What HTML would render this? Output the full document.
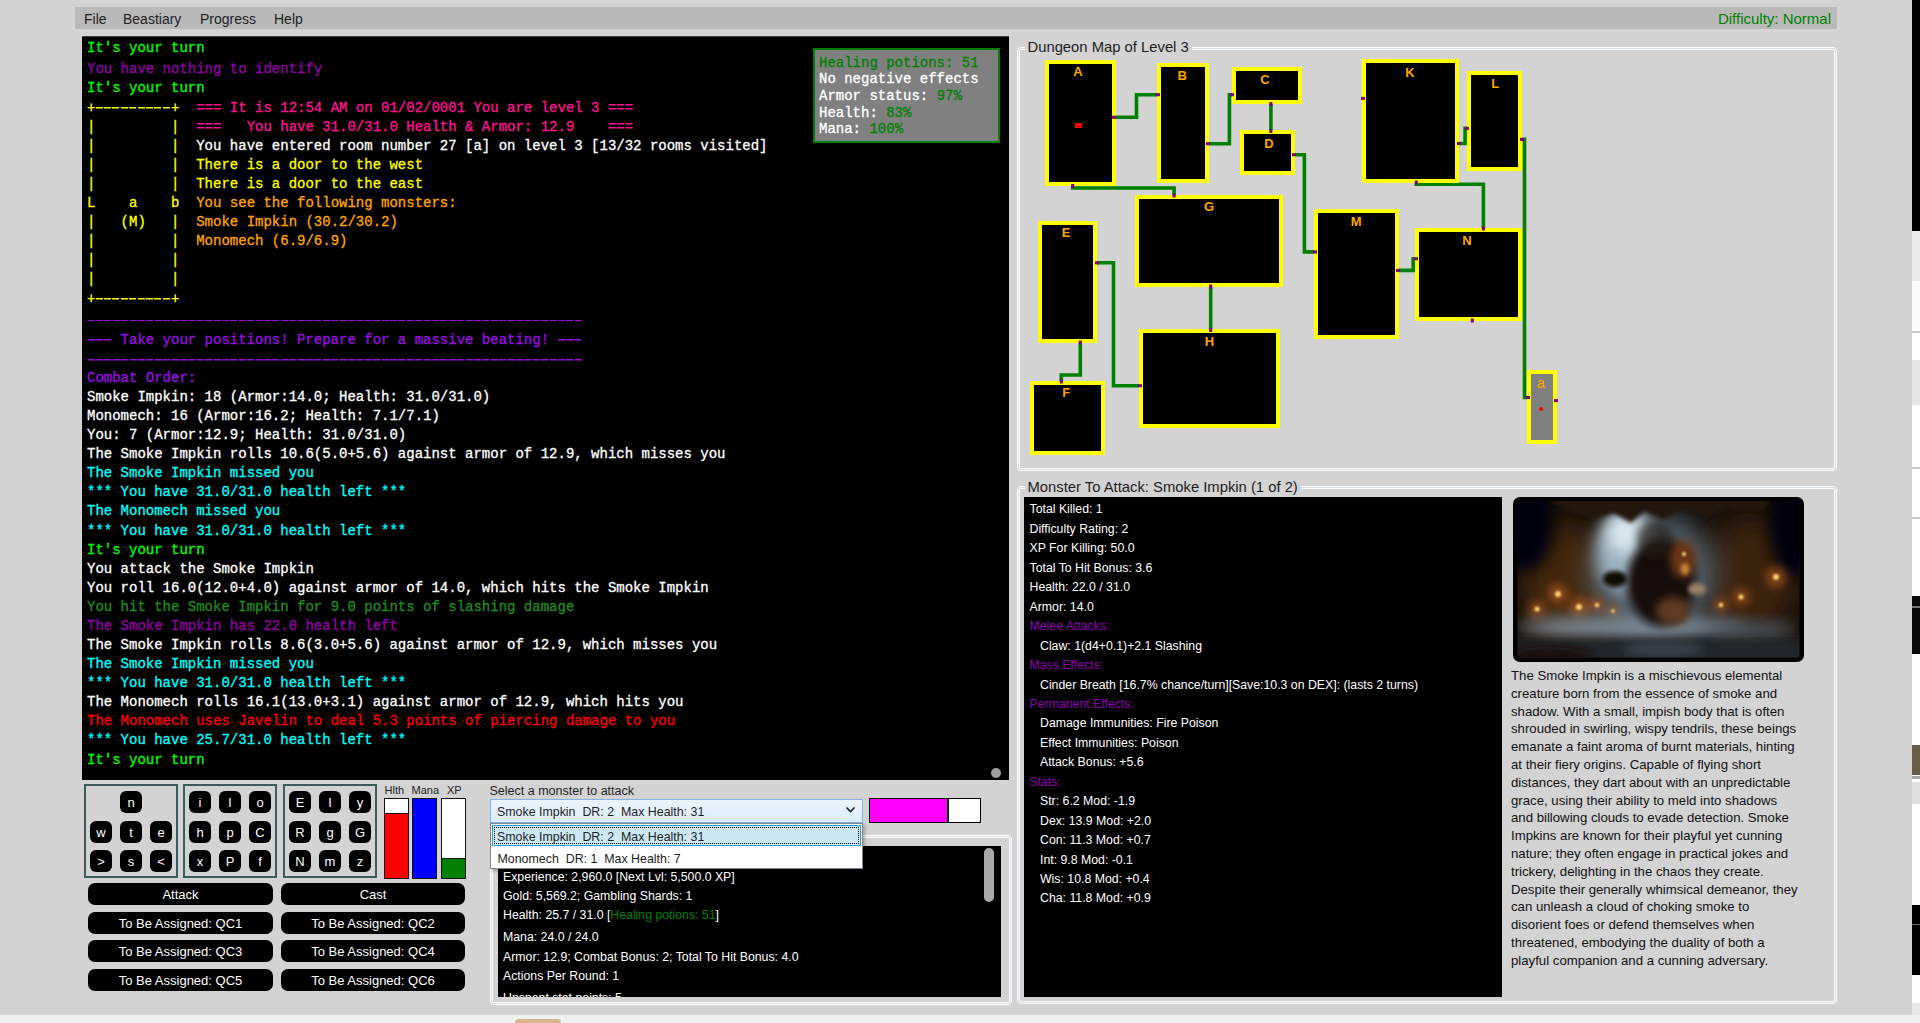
<!DOCTYPE html>
<html><head><meta charset="utf-8"><style>*{margin:0;padding:0;box-sizing:border-box}
html,body{width:1920px;height:1023px;overflow:hidden;background:#f0f0f0}
body{position:relative;font-family:"Liberation Sans",sans-serif}
.a{position:absolute}
.win{position:absolute;left:0;top:0;width:1912px;height:1015px;background:#d3d3d3;overflow:hidden}
.menu{left:75px;top:7px;width:1762px;height:22px;background:#b9b9b9}
.mi{font-size:14px;line-height:22px;top:1px;color:#1e1e1e;white-space:pre}
.term{left:82px;top:36px;width:927px;height:744px;background:#000;overflow:hidden}
.tl{position:absolute;left:5px;font-family:"Liberation Mono",monospace;font-size:14px;line-height:19px;white-space:pre;-webkit-text-stroke:0.3px currentColor}
.gb{position:absolute;border:1px solid #fff;border-radius:4px}
.gb>.i1{position:absolute;left:0;top:0;right:0;bottom:0;border:1px solid #d5dfe5;border-radius:3px}
.gb>.i1>.i2{position:absolute;left:0;top:0;right:0;bottom:0;border:1px solid #fff;border-radius:2px}
.gh{position:absolute;background:#d3d3d3;color:#1e1e1e;white-space:pre;font-size:14.8px;line-height:18px;padding:0 3px}
.room{position:absolute;background:#000;border:4px solid #ff0}
.rl{position:absolute;left:0;right:0;text-align:center;color:#ffa500;font-weight:bold;font-size:13px;line-height:14px}
.txt{position:absolute;white-space:pre;color:#fff;font-size:12.3px;line-height:19px}
.kp{position:absolute;top:784px;width:94px;height:94px;border:2px solid #3c5c5c}
.kb{position:absolute;width:22px;height:22px;background:#000;border-radius:6px;color:#fff;font-size:13px;line-height:23px;text-align:center}
.bt{position:absolute;height:22px;background:#000;border-radius:7px;color:#fff;font-size:13px;line-height:24px;text-align:center;white-space:pre}
.bar{position:absolute;top:798px;width:25px;height:81px;border:1px solid #111;background:#fff;overflow:hidden}
.bar>div{position:absolute;left:0;right:0;bottom:0}
</style></head><body>
<div class="win">
<div class="a menu" style="padding-top:1.5px"><div class="a mi" style="left:9px">File</div><div class="a mi" style="left:48px">Beastiary</div><div class="a mi" style="left:125px">Progress</div><div class="a mi" style="left:199px">Help</div><div class="a mi" style="right:6px;color:#008000;font-size:15px">Difficulty: Normal</div></div>
<div class="a term"><div class="tl" style="top:2.87px"><span style="color:#00ff00">It's your turn</span></div>
<div class="tl" style="top:24.37px"><span style="color:#9400a8">You have nothing to identify</span></div>
<div class="tl" style="top:43.47px"><span style="color:#00ff00">It's your turn</span></div>
<div class="tl" style="top:62.77px"><span style="color:#ffff00">+</span><span style="display:inline-block;vertical-align:top;width:75.6px;height:19px;background:repeating-linear-gradient(90deg,transparent 0 0.7px,#ffff00 0.7px 7.7px,transparent 7.7px 8.4px) 0 8.68px/100% 1.5px no-repeat"></span><span style="color:#ffff00">+  </span><span style="color:#ff1493">=== It is 12:54 AM on 01/02/0001 You are level 3 ===</span></div>
<div class="tl" style="top:81.85px"><span style="color:#ffff00">|         |  </span><span style="color:#ff1493">===   You have 31.0/31.0 Health &amp; Armor: 12.9    ===</span></div>
<div class="tl" style="top:100.93px"><span style="color:#ffff00">|         |  </span><span style="color:#ffffff">You have entered room number 27 [a] on level 3 [13/32 rooms visited]</span></div>
<div class="tl" style="top:120.01px"><span style="color:#ffff00">|         |  </span><span style="color:#ffff00">There is a door to the west</span></div>
<div class="tl" style="top:139.09px"><span style="color:#ffff00">|         |  </span><span style="color:#ffff00">There is a door to the east</span></div>
<div class="tl" style="top:158.17px"><span style="color:#ffff00">L    a    b  </span><span style="color:#ffa500">You see the following monsters:</span></div>
<div class="tl" style="top:177.25px"><span style="color:#ffff00">|   (M)   |  </span><span style="color:#ffa500">Smoke Impkin (30.2/30.2)</span></div>
<div class="tl" style="top:196.33px"><span style="color:#ffff00">|         |  </span><span style="color:#ffa500">Monomech (6.9/6.9)</span></div>
<div class="tl" style="top:215.41px"><span style="color:#ffff00">|         |</span></div>
<div class="tl" style="top:234.49px"><span style="color:#ffff00">|         |</span></div>
<div class="tl" style="top:253.57px"><span style="color:#ffff00">+</span><span style="display:inline-block;vertical-align:top;width:75.6px;height:19px;background:repeating-linear-gradient(90deg,transparent 0 0.7px,#ffff00 0.7px 7.7px,transparent 7.7px 8.4px) 0 8.68px/100% 1.5px no-repeat"></span><span style="color:#ffff00">+</span></div>
<div class="tl" style="top:275.67px"><span style="display:inline-block;vertical-align:top;width:495.6px;height:19px;background:repeating-linear-gradient(90deg,transparent 0 0.7px,#9a10e0 0.7px 7.7px,transparent 7.7px 8.4px) 0 8.63px/100% 1.2px no-repeat"></span></div>
<div class="tl" style="top:294.75px"><span style="display:inline-block;vertical-align:top;width:25.2px;height:19px;background:repeating-linear-gradient(90deg,transparent 0 0.7px,#9a10e0 0.7px 7.7px,transparent 7.7px 8.4px) 0 8.68px/100% 1.5px no-repeat"></span><span style="color:#9a10e0"> Take your positions! Prepare for a massive beating! </span><span style="display:inline-block;vertical-align:top;width:25.2px;height:19px;background:repeating-linear-gradient(90deg,transparent 0 0.7px,#9a10e0 0.7px 7.7px,transparent 7.7px 8.4px) 0 8.68px/100% 1.5px no-repeat"></span></div>
<div class="tl" style="top:313.83px"><span style="display:inline-block;vertical-align:top;width:495.6px;height:19px;background:repeating-linear-gradient(90deg,transparent 0 0.7px,#9a10e0 0.7px 7.7px,transparent 7.7px 8.4px) 0 8.68px/100% 1.5px no-repeat"></span></div>
<div class="tl" style="top:332.91px"><span style="color:#9a10e0">Combat Order:</span></div>
<div class="tl" style="top:351.99px"><span style="color:#ffffff">Smoke Impkin: 18 (Armor:14.0; Health: 31.0/31.0)</span></div>
<div class="tl" style="top:371.07px"><span style="color:#ffffff">Monomech: 16 (Armor:16.2; Health: 7.1/7.1)</span></div>
<div class="tl" style="top:390.15px"><span style="color:#ffffff">You: 7 (Armor:12.9; Health: 31.0/31.0)</span></div>
<div class="tl" style="top:409.23px"><span style="color:#ffffff">The Smoke Impkin rolls 10.6(5.0+5.6) against armor of 12.9, which misses you</span></div>
<div class="tl" style="top:428.31px"><span style="color:#00ffff">The Smoke Impkin missed you</span></div>
<div class="tl" style="top:447.39px"><span style="color:#00ffff">*** You have 31.0/31.0 health left ***</span></div>
<div class="tl" style="top:466.47px"><span style="color:#00ffff">The Monomech missed you</span></div>
<div class="tl" style="top:485.55px"><span style="color:#00ffff">*** You have 31.0/31.0 health left ***</span></div>
<div class="tl" style="top:504.63px"><span style="color:#00ff00">It's your turn</span></div>
<div class="tl" style="top:523.71px"><span style="color:#ffffff">You attack the Smoke Impkin</span></div>
<div class="tl" style="top:542.79px"><span style="color:#ffffff">You roll 16.0(12.0+4.0) against armor of 14.0, which hits the Smoke Impkin</span></div>
<div class="tl" style="top:561.87px"><span style="color:#228b22">You hit the Smoke Impkin for 9.0 points of slashing damage</span></div>
<div class="tl" style="top:580.95px"><span style="color:#9400a8">The Smoke Impkin has 22.0 health left</span></div>
<div class="tl" style="top:600.03px"><span style="color:#ffffff">The Smoke Impkin rolls 8.6(3.0+5.6) against armor of 12.9, which misses you</span></div>
<div class="tl" style="top:619.11px"><span style="color:#00ffff">The Smoke Impkin missed you</span></div>
<div class="tl" style="top:638.19px"><span style="color:#00ffff">*** You have 31.0/31.0 health left ***</span></div>
<div class="tl" style="top:657.27px"><span style="color:#ffffff">The Monomech rolls 16.1(13.0+3.1) against armor of 12.9, which hits you</span></div>
<div class="tl" style="top:676.35px"><span style="color:#ff0000">The Monomech uses Javelin to deal 5.3 points of piercing damage to you</span></div>
<div class="tl" style="top:695.43px"><span style="color:#00ffff">*** You have 25.7/31.0 health left ***</span></div>
<div class="tl" style="top:714.51px"><span style="color:#00ff00">It's your turn</span></div>
<div class="a" style="left:909px;top:732px;width:10px;height:10px;border-radius:50%;background:#a0a0a0"></div></div>
<div class="a" style="left:813px;top:48px;width:187px;height:95px;background:#808080;border:2.5px solid #008000"></div>
<div class="tl" style="left:819px;top:54.67px;line-height:17px"><span style="color:#008000">Healing potions: 51</span></div>
<div class="tl" style="left:819px;top:71.27px;line-height:17px"><span style="color:#fff">No negative effects</span></div>
<div class="tl" style="left:819px;top:87.97px;line-height:17px"><span style="color:#fff">Armor status: </span><span style="color:#008000">97%</span></div>
<div class="tl" style="left:819px;top:104.67px;line-height:17px"><span style="color:#fff">Health: </span><span style="color:#008000">83%</span></div>
<div class="tl" style="left:819px;top:121.27px;line-height:17px"><span style="color:#fff">Mana: </span><span style="color:#008000">100%</span></div>
<div class="gb" style="left:1017px;top:47px;width:820px;height:424px"><div class="i1"><div class="i2"></div></div></div>
<div class="gh" style="left:1024.5px;top:38.37px">Dungeon Map of Level 3</div>
<svg class="a" style="left:0;top:0" width="1912" height="1015"><polyline points="1114.0,117.3 1136.5,117.3 1136.5,94.7 1158.0,94.7" fill="none" stroke="#008000" stroke-width="3.6" stroke-linejoin="miter" stroke-linecap="square"/><polyline points="1208.0,143.7 1229.4,143.7 1229.4,94.7 1232.0,94.7" fill="none" stroke="#008000" stroke-width="3.6" stroke-linejoin="miter" stroke-linecap="square"/><polyline points="1270.9,104.0 1270.9,130.5" fill="none" stroke="#008000" stroke-width="3.6" stroke-linejoin="miter" stroke-linecap="square"/><polyline points="1294.0,154.7 1304.4,154.7 1304.4,251.9 1315.0,251.9" fill="none" stroke="#008000" stroke-width="3.6" stroke-linejoin="miter" stroke-linecap="square"/><polyline points="1072.7,186.0 1072.7,188.0 1174.1,188.0 1174.1,195.5" fill="none" stroke="#008000" stroke-width="3.6" stroke-linejoin="miter" stroke-linecap="square"/><polyline points="1210.7,286.0 1210.7,330.0" fill="none" stroke="#008000" stroke-width="3.6" stroke-linejoin="miter" stroke-linecap="square"/><polyline points="1097.0,262.8 1113.5,262.8 1113.5,385.7 1140.0,385.7" fill="none" stroke="#008000" stroke-width="3.6" stroke-linejoin="miter" stroke-linecap="square"/><polyline points="1080.3,342.0 1080.3,375.0 1061.3,375.0 1061.3,381.5" fill="none" stroke="#008000" stroke-width="3.6" stroke-linejoin="miter" stroke-linecap="square"/><polyline points="1398.0,270.4 1413.2,270.4 1413.2,258.7 1416.0,258.7" fill="none" stroke="#008000" stroke-width="3.6" stroke-linejoin="miter" stroke-linecap="square"/><polyline points="1458.0,143.5 1465.1,143.5 1465.1,128.4 1468.0,128.4" fill="none" stroke="#008000" stroke-width="3.6" stroke-linejoin="miter" stroke-linecap="square"/><polyline points="1416.3,182.0 1416.3,184.2 1483.4,184.2 1483.4,228.5" fill="none" stroke="#008000" stroke-width="3.6" stroke-linejoin="miter" stroke-linecap="square"/><polyline points="1521.0,139.4 1524.5,139.4 1524.5,397.5 1528.0,397.5" fill="none" stroke="#008000" stroke-width="3.6" stroke-linejoin="miter" stroke-linecap="square"/></svg>
<div class="room" style="left:1045px;top:60px;width:71px;height:126px"><div class="rl" style="left:9.0px;width:40px;right:auto;top:1.4px">A</div></div>
<div class="room" style="left:1157px;top:63px;width:52px;height:120px"><div class="rl" style="left:1.2px;width:40px;right:auto;top:2.4px">B</div></div>
<div class="room" style="left:1232px;top:67px;width:70px;height:37px"><div class="rl" style="left:9.0px;width:40px;right:auto;top:1.9px">C</div></div>
<div class="room" style="left:1240px;top:130px;width:55px;height:45px"><div class="rl" style="left:5.0px;width:40px;right:auto;top:2.6px">D</div></div>
<div class="room" style="left:1362px;top:59px;width:97px;height:124px"><div class="rl" style="left:24.0px;width:40px;right:auto;top:2.7px">K</div></div>
<div class="room" style="left:1467px;top:71px;width:55px;height:100px"><div class="rl" style="left:4.2px;width:40px;right:auto;top:1.7px">L</div></div>
<div class="room" style="left:1135px;top:195px;width:148px;height:92px"><div class="rl" style="left:50.0px;width:40px;right:auto;top:1.4px">G</div></div>
<div class="room" style="left:1038px;top:221px;width:59px;height:122px"><div class="rl" style="left:4.1px;width:40px;right:auto;top:1.0px">E</div></div>
<div class="room" style="left:1139px;top:329px;width:141px;height:99px"><div class="rl" style="left:46.5px;width:40px;right:auto;top:1.5px">H</div></div>
<div class="room" style="left:1030px;top:381px;width:75px;height:74px"><div class="rl" style="left:12.2px;width:40px;right:auto;top:1.4px">F</div></div>
<div class="room" style="left:1314px;top:209px;width:85px;height:130px"><div class="rl" style="left:18.1px;width:40px;right:auto;top:2.4px">M</div></div>
<div class="room" style="left:1415px;top:228px;width:107px;height:93px"><div class="rl" style="left:28.0px;width:40px;right:auto;top:1.9px">N</div></div>
<div class="room" style="left:1527px;top:370px;width:30px;height:74px;background:#808080"><div class="rl" style="top:2px;left:-2px;font-weight:normal;font-size:14px">a</div><div class="a" style="left:8px;top:33px;width:4px;height:4px;background:#f00;border-radius:2px"></div></div>
<div class="a" style="left:1075px;top:122.5px;width:7px;height:5px;background:#f00"></div>
<svg class="a" style="left:0;top:0" width="1912" height="1015"><rect x="1112.0" y="115.8" width="4" height="3" fill="#800080"/><rect x="1156.0" y="93.2" width="4" height="3" fill="#800080"/><rect x="1206.0" y="142.2" width="4" height="3" fill="#800080"/><rect x="1230.0" y="93.2" width="4" height="3" fill="#800080"/><rect x="1269.4" y="102.0" width="3" height="4" fill="#800080"/><rect x="1269.4" y="129.0" width="3" height="4" fill="#800080"/><rect x="1292.0" y="153.2" width="4" height="3" fill="#800080"/><rect x="1313.0" y="250.4" width="4" height="3" fill="#800080"/><rect x="1071.2" y="184.0" width="3" height="4" fill="#800080"/><rect x="1172.6" y="193.5" width="3" height="4" fill="#800080"/><rect x="1209.2" y="284.5" width="3" height="4" fill="#800080"/><rect x="1209.2" y="328.0" width="3" height="4" fill="#800080"/><rect x="1095.0" y="261.3" width="4" height="3" fill="#800080"/><rect x="1138.0" y="384.2" width="4" height="3" fill="#800080"/><rect x="1078.8" y="340.5" width="3" height="4" fill="#800080"/><rect x="1059.8" y="379.5" width="3" height="4" fill="#800080"/><rect x="1396.0" y="268.9" width="4" height="3" fill="#800080"/><rect x="1414.0" y="257.2" width="4" height="3" fill="#800080"/><rect x="1457.0" y="142.0" width="4" height="3" fill="#800080"/><rect x="1465.0" y="126.9" width="4" height="3" fill="#800080"/><rect x="1414.8" y="180.5" width="3" height="4" fill="#800080"/><rect x="1481.9" y="226.5" width="3" height="4" fill="#800080"/><rect x="1520.0" y="137.9" width="4" height="3" fill="#800080"/><rect x="1526.0" y="396.0" width="4" height="3" fill="#800080"/><rect x="1361.0" y="96.9" width="4" height="3" fill="#800080"/><rect x="1470.8" y="318.5" width="3" height="4" fill="#800080"/><rect x="1554.0" y="399.1" width="4" height="3" fill="#800080"/></svg>
<div class="gb" style="left:1017px;top:486px;width:820px;height:518px"><div class="i1"><div class="i2"></div></div></div>
<div class="gh" style="left:1024.5px;top:477.57px">Monster To Attack: Smoke Impkin (1 of 2)</div>
<div class="a" style="left:1024px;top:497px;width:478px;height:500px;background:#000"></div>
<div class="txt" style="left:1029.5px;top:500.49px;color:#fff">Total Killed: 1</div>
<div class="txt" style="left:1029.5px;top:519.94px;color:#fff">Difficulty Rating: 2</div>
<div class="txt" style="left:1029.5px;top:539.39px;color:#fff">XP For Killing: 50.0</div>
<div class="txt" style="left:1029.5px;top:558.84px;color:#fff">Total To Hit Bonus: 3.6</div>
<div class="txt" style="left:1029.5px;top:578.29px;color:#fff">Health: 22.0 / 31.0</div>
<div class="txt" style="left:1029.5px;top:597.74px;color:#fff">Armor: 14.0</div>
<div class="txt" style="left:1029.5px;top:617.19px;color:#9000b0">Melee Attacks:</div>
<div class="txt" style="left:1040px;top:636.64px;color:#fff">Claw: 1(d4+0.1)+2.1 Slashing</div>
<div class="txt" style="left:1029.5px;top:656.09px;color:#9000b0">Mass Effects:</div>
<div class="txt" style="left:1040px;top:675.54px;color:#fff">Cinder Breath [16.7% chance/turn][Save:10.3 on DEX]: (lasts 2 turns)</div>
<div class="txt" style="left:1029.5px;top:694.99px;color:#9000b0">Permanent Effects:</div>
<div class="txt" style="left:1040px;top:714.44px;color:#fff">Damage Immunities: Fire Poison</div>
<div class="txt" style="left:1040px;top:733.89px;color:#fff">Effect Immunities: Poison</div>
<div class="txt" style="left:1040px;top:753.34px;color:#fff">Attack Bonus: +5.6</div>
<div class="txt" style="left:1029.5px;top:772.79px;color:#9000b0">Stats:</div>
<div class="txt" style="left:1040px;top:792.24px;color:#fff">Str: 6.2 Mod: -1.9</div>
<div class="txt" style="left:1040px;top:811.69px;color:#fff">Dex: 13.9 Mod: +2.0</div>
<div class="txt" style="left:1040px;top:831.14px;color:#fff">Con: 11.3 Mod: +0.7</div>
<div class="txt" style="left:1040px;top:850.59px;color:#fff">Int: 9.8 Mod: -0.1</div>
<div class="txt" style="left:1040px;top:870.04px;color:#fff">Wis: 10.8 Mod: +0.4</div>
<div class="txt" style="left:1040px;top:889.49px;color:#fff">Cha: 11.8 Mod: +0.9</div>
<svg class="a" style="left:1512.5px;top:497px" width="291" height="165" viewBox="0 0 291 165">
<defs>
<clipPath id="ic"><rect x="4.5" y="4" width="282" height="156.5" rx="3"/></clipPath>
<filter id="b1" x="-50%" y="-50%" width="200%" height="200%"><feGaussianBlur stdDeviation="0.8"/></filter>
<filter id="b2" x="-50%" y="-50%" width="200%" height="200%"><feGaussianBlur stdDeviation="2"/></filter>
<filter id="b4" x="-50%" y="-50%" width="200%" height="200%"><feGaussianBlur stdDeviation="4"/></filter>
<filter id="b8" x="-50%" y="-50%" width="200%" height="200%"><feGaussianBlur stdDeviation="8"/></filter>
<filter id="b14" x="-50%" y="-50%" width="200%" height="200%"><feGaussianBlur stdDeviation="14"/></filter>
</defs>
<rect x="0" y="0" width="291" height="165" rx="7" fill="#000"/>
<g clip-path="url(#ic)">
<rect x="0" y="0" width="291" height="165" fill="#120c09"/>
<ellipse cx="55" cy="85" rx="48" ry="60" fill="#42250f" filter="url(#b14)"/>
<ellipse cx="238" cy="80" rx="48" ry="62" fill="#3a200e" filter="url(#b14)"/>
<ellipse cx="12" cy="30" rx="28" ry="45" fill="#03050c" filter="url(#b8)"/>
<ellipse cx="282" cy="30" rx="26" ry="50" fill="#03050c" filter="url(#b8)"/>
<ellipse cx="140" cy="78" rx="62" ry="62" fill="#56636e" filter="url(#b14)"/>
<ellipse cx="115" cy="55" rx="32" ry="42" fill="#9cb0be" filter="url(#b8)"/>
<ellipse cx="112" cy="36" rx="18" ry="20" fill="#dce8f0" filter="url(#b8)"/>
<path d="M30 0 L260 0 L250 14 L215 12 L195 20 L170 12 L150 22 L132 14 L118 26 L100 16 L80 22 L60 16 Z" fill="#22150d" filter="url(#b2)"/>
<circle cx="45" cy="97" r="10.5" fill="#c06020" opacity="0.55" filter="url(#b4)"/><circle cx="24" cy="112" r="8.75" fill="#c06020" opacity="0.55" filter="url(#b4)"/><circle cx="66" cy="110" r="10.5" fill="#c06020" opacity="0.55" filter="url(#b4)"/><circle cx="84" cy="108" r="7.700000000000001" fill="#c06020" opacity="0.55" filter="url(#b4)"/><circle cx="263" cy="80" r="10.5" fill="#c06020" opacity="0.55" filter="url(#b4)"/><circle cx="228" cy="100" r="8.75" fill="#c06020" opacity="0.55" filter="url(#b4)"/><circle cx="208" cy="108" r="7.700000000000001" fill="#c06020" opacity="0.55" filter="url(#b4)"/><circle cx="100" cy="114" r="6.3" fill="#c06020" opacity="0.55" filter="url(#b4)"/>
<ellipse cx="120" cy="130" rx="115" ry="11" fill="#7e8c98" filter="url(#b8)"/>
<ellipse cx="240" cy="134" rx="45" ry="9" fill="#48525c" filter="url(#b8)"/>
<rect x="0" y="143" width="291" height="25" fill="#20252c" filter="url(#b4)"/>
<ellipse cx="150" cy="152" rx="40" ry="8" fill="#38404a" filter="url(#b4)"/>
<ellipse cx="35" cy="160" rx="45" ry="10" fill="#1c100c" filter="url(#b4)"/>
<ellipse cx="148" cy="85" rx="34" ry="44" fill="#170f0a" filter="url(#b4)"/>
<ellipse cx="142" cy="42" rx="18" ry="18" fill="#241c18" opacity="0.7" filter="url(#b4)"/>
<ellipse cx="170" cy="62" rx="13" ry="19" fill="#6a3414" filter="url(#b4)"/>
<ellipse cx="160" cy="114" rx="17" ry="14" fill="#5e3a22" filter="url(#b4)"/>
<ellipse cx="102" cy="82" rx="12" ry="8" fill="#0c0806" filter="url(#b2)"/>
<ellipse cx="184" cy="92" rx="9" ry="6" fill="#9a8068" filter="url(#b2)"/>
<ellipse cx="172" cy="72" rx="4" ry="6" fill="#d08a3a" filter="url(#b2)"/>
<circle cx="171" cy="57" r="2" fill="#ffe080" filter="url(#b1)"/>
<circle cx="45" cy="97" r="3" fill="#ffd070" filter="url(#b1)"/><circle cx="24" cy="112" r="2.5" fill="#ffd070" filter="url(#b1)"/><circle cx="66" cy="110" r="3" fill="#ffd070" filter="url(#b1)"/><circle cx="84" cy="108" r="2.2" fill="#ffd070" filter="url(#b1)"/><circle cx="263" cy="80" r="3" fill="#ffd070" filter="url(#b1)"/><circle cx="228" cy="100" r="2.5" fill="#ffd070" filter="url(#b1)"/><circle cx="208" cy="108" r="2.2" fill="#ffd070" filter="url(#b1)"/><circle cx="100" cy="114" r="1.8" fill="#ffd070" filter="url(#b1)"/>
</g>
</svg>
<div class="txt" style="left:1511px;top:666.93px;color:#111;font-size:13.2px;line-height:18px">The Smoke Impkin is a mischievous elemental</div>
<div class="txt" style="left:1511px;top:684.73px;color:#111;font-size:13.2px;line-height:18px">creature born from the essence of smoke and</div>
<div class="txt" style="left:1511px;top:702.53px;color:#111;font-size:13.2px;line-height:18px">shadow. With a small, impish body that is often</div>
<div class="txt" style="left:1511px;top:720.33px;color:#111;font-size:13.2px;line-height:18px">shrouded in swirling, wispy tendrils, these beings</div>
<div class="txt" style="left:1511px;top:738.13px;color:#111;font-size:13.2px;line-height:18px">emanate a faint aroma of burnt materials, hinting</div>
<div class="txt" style="left:1511px;top:755.93px;color:#111;font-size:13.2px;line-height:18px">at their fiery origins. Capable of flying short</div>
<div class="txt" style="left:1511px;top:773.73px;color:#111;font-size:13.2px;line-height:18px">distances, they dart about with an unpredictable</div>
<div class="txt" style="left:1511px;top:791.53px;color:#111;font-size:13.2px;line-height:18px">grace, using their ability to meld into shadows</div>
<div class="txt" style="left:1511px;top:809.33px;color:#111;font-size:13.2px;line-height:18px">and billowing clouds to evade detection. Smoke</div>
<div class="txt" style="left:1511px;top:827.13px;color:#111;font-size:13.2px;line-height:18px">Impkins are known for their playful yet cunning</div>
<div class="txt" style="left:1511px;top:844.93px;color:#111;font-size:13.2px;line-height:18px">nature; they often engage in practical jokes and</div>
<div class="txt" style="left:1511px;top:862.73px;color:#111;font-size:13.2px;line-height:18px">trickery, delighting in the chaos they create.</div>
<div class="txt" style="left:1511px;top:880.53px;color:#111;font-size:13.2px;line-height:18px">Despite their generally whimsical demeanor, they</div>
<div class="txt" style="left:1511px;top:898.33px;color:#111;font-size:13.2px;line-height:18px">can unleash a cloud of choking smoke to</div>
<div class="txt" style="left:1511px;top:916.13px;color:#111;font-size:13.2px;line-height:18px">disorient foes or defend themselves when</div>
<div class="txt" style="left:1511px;top:933.93px;color:#111;font-size:13.2px;line-height:18px">threatened, embodying the duality of both a</div>
<div class="txt" style="left:1511px;top:951.73px;color:#111;font-size:13.2px;line-height:18px">playful companion and a cunning adversary.</div>
<div class="kp" style="left:84px"></div>
<div class="kb" style="left:120px;top:791.0px">n</div>
<div class="kb" style="left:90px;top:820.7px">w</div>
<div class="kb" style="left:120px;top:820.7px">t</div>
<div class="kb" style="left:150px;top:820.7px">e</div>
<div class="kb" style="left:90px;top:850.4px">&gt;</div>
<div class="kb" style="left:120px;top:850.4px">s</div>
<div class="kb" style="left:150px;top:850.4px">&lt;</div>
<div class="kp" style="left:183px"></div>
<div class="kb" style="left:189px;top:791.0px">i</div>
<div class="kb" style="left:219px;top:791.0px">l</div>
<div class="kb" style="left:249px;top:791.0px">o</div>
<div class="kb" style="left:189px;top:820.7px">h</div>
<div class="kb" style="left:219px;top:820.7px">p</div>
<div class="kb" style="left:249px;top:820.7px">C</div>
<div class="kb" style="left:189px;top:850.4px">x</div>
<div class="kb" style="left:219px;top:850.4px">P</div>
<div class="kb" style="left:249px;top:850.4px">f</div>
<div class="kp" style="left:283px"></div>
<div class="kb" style="left:289px;top:791.0px">E</div>
<div class="kb" style="left:319px;top:791.0px">I</div>
<div class="kb" style="left:349px;top:791.0px">y</div>
<div class="kb" style="left:289px;top:820.7px">R</div>
<div class="kb" style="left:319px;top:820.7px">g</div>
<div class="kb" style="left:349px;top:820.7px">G</div>
<div class="kb" style="left:289px;top:850.4px">N</div>
<div class="kb" style="left:319px;top:850.4px">m</div>
<div class="kb" style="left:349px;top:850.4px">z</div>
<div class="txt" style="left:384.5px;top:782.89px;color:#1e1e1e;font-size:11px;line-height:14px">Hlth</div>
<div class="txt" style="left:411.5px;top:782.89px;color:#1e1e1e;font-size:11px;line-height:14px">Mana</div>
<div class="txt" style="left:447px;top:782.89px;color:#1e1e1e;font-size:11px;line-height:14px">XP</div>
<div class="bar" style="left:383.5px"><div style="top:14px;background:#f00;border-top:1px solid #111"></div></div>
<div class="bar" style="left:412px"><div style="top:0;background:#00f"></div></div>
<div class="bar" style="left:441px"><div style="top:58.5px;background:#008000;border-top:1px solid #111"></div></div>
<div class="bt" style="left:88px;top:883px;width:185px">Attack</div>
<div class="bt" style="left:281px;top:883px;width:184px">Cast</div>
<div class="bt" style="left:88px;top:911.5px;width:185px">To Be Assigned: QC1</div>
<div class="bt" style="left:281px;top:911.5px;width:184px">To Be Assigned: QC2</div>
<div class="bt" style="left:88px;top:940px;width:185px">To Be Assigned: QC3</div>
<div class="bt" style="left:281px;top:940px;width:184px">To Be Assigned: QC4</div>
<div class="bt" style="left:88px;top:968.5px;width:185px">To Be Assigned: QC5</div>
<div class="bt" style="left:281px;top:968.5px;width:184px">To Be Assigned: QC6</div>
<div class="txt" style="left:489.5px;top:783.27px;color:#1e1e1e;font-size:12.5px;line-height:16px">Select a monster to attack</div>
<div class="gb" style="left:490px;top:835px;width:522px;height:170px"><div class="i1"><div class="i2"></div></div></div>
<div class="a" style="left:498px;top:846px;width:503px;height:151px;background:#000;overflow:hidden"><div class="a" style="left:486px;top:1.5px;width:10px;height:54px;border-radius:5px;background:#a8a8a8"></div></div>
<div class="a" style="left:498px;top:846px;width:486px;height:151px;overflow:hidden"><div class="txt" style="left:5px;top:21.54px">Experience: 2,960.0 [Next Lvl: 5,500.0 XP]</div><div class="txt" style="left:5px;top:40.94px">Gold: 5,569.2; Gambling Shards: 1</div><div class="txt" style="left:5px;top:60.34px">Health: 25.7 / 31.0 [<span style="color:#008000">Healing potions: 51</span>]</div><div class="txt" style="left:5px;top:82.24px">Mana: 24.0 / 24.0</div><div class="txt" style="left:5px;top:101.64px">Armor: 12.9; Combat Bonus: 2; Total To Hit Bonus: 4.0</div><div class="txt" style="left:5px;top:121.04px">Actions Per Round: 1</div><div class="txt" style="left:5px;top:142.74px">Unspent stat points: 5</div></div>
<div class="a" style="left:490px;top:799px;width:373px;height:24px;border:1px solid #7eb4ea;background:linear-gradient(#ecf4fc,#dcecfc)"></div>
<div class="txt" style="left:497px;top:803.70px;color:#1e1e1e;font-size:12.4px;line-height:16px">Smoke Impkin  DR: 2  Max Health: 31</div>
<svg class="a" style="left:845px;top:806px" width="12" height="8"><polyline points="1.5,1.5 5.5,5.5 9.5,1.5" fill="none" stroke="#1e1e1e" stroke-width="1.6"/></svg>
<div class="a" style="left:869px;top:798px;width:112px;height:25px;border:1.5px solid #000;background:#fff"><div class="a" style="left:0;top:0;bottom:0;width:77px;background:#f0f"></div><div class="a" style="left:77px;top:0;bottom:0;width:1.5px;background:#000"></div></div>
<div class="a" style="left:490px;top:823px;width:373px;height:46px;background:#fff;border:1px solid #828790;box-shadow:2px 2px 3px rgba(0,0,0,0.25)"><div class="a" style="left:1px;top:1px;width:369px;height:21px;background:#cce8f4;border:1px solid #26a0da"><div class="a" style="left:1px;top:1px;right:1px;bottom:1px;border:1px dotted #000"></div></div></div>
<div class="txt" style="left:497px;top:829.20px;color:#1e1e1e;font-size:12.4px;line-height:16px">Smoke Impkin  DR: 2  Max Health: 31</div>
<div class="txt" style="left:497.5px;top:850.70px;color:#1e1e1e;font-size:12.4px;line-height:16px">Monomech  DR: 1  Max Health: 7</div>
<div class="a" style="left:82px;top:36px;width:927px;height:1px;background:#3a3a3a"></div>
</div>
<div class="a" style="left:1912px;top:0;width:8px;height:1015px;background:#fff"><div class="a" style="left:0;top:0;width:8px;height:231px;background:#000"></div><div class="a" style="left:0;top:231px;width:8px;height:50px;background:#ececec"></div><div class="a" style="left:0;top:281px;width:8px;height:50px;background:#fafafa"></div><div class="a" style="left:0;top:331px;width:8px;height:2px;background:#c8c8c8"></div><div class="a" style="left:0;top:360px;width:8px;height:45px;background:#e6e6e6"></div><div class="a" style="left:0;top:467px;width:8px;height:2px;background:#c8c8c8"></div><div class="a" style="left:0;top:517px;width:8px;height:2px;background:#c8c8c8"></div><div class="a" style="left:0;top:596px;width:8px;height:58px;background:#0a0a0a"></div><div class="a" style="left:0;top:606px;width:8px;height:2px;background:#777"></div><div class="a" style="left:0;top:745px;width:8px;height:30px;background:#6a5a48"></div><div class="a" style="left:0;top:776px;width:8px;height:3px;background:#aaa"></div><div class="a" style="left:0;top:782px;width:8px;height:22px;background:#e0e0e0"></div><div class="a" style="left:0;top:905px;width:8px;height:70px;background:#000"></div><div class="a" style="left:0;top:924px;width:8px;height:1px;background:#666"></div><div class="a" style="left:0;top:1003px;width:8px;height:12px;background:#e8e8e8"></div></div>
<div class="a" style="left:515px;top:1019px;width:46px;height:8px;border-radius:4px;background:#d9b48a"></div>
</body></html>
